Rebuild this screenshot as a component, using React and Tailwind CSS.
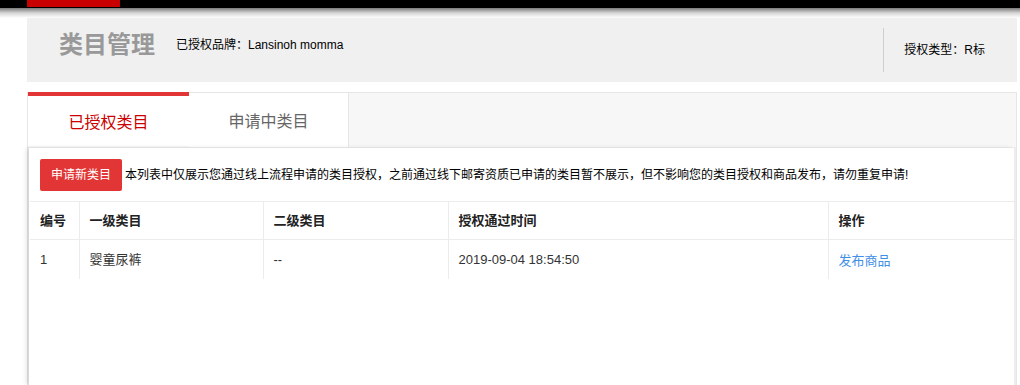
const font = { fontFamily: '"Liberation Sans", "Noto Sans CJK SC", sans-serif' }

const rows = [
  { id: '1', first: '婴童尿裤', second: '--', time: '2019-09-04 18:54:50' },
]

const App = () => {
  return (
    <div className="w-[1020px] h-[385px] overflow-hidden bg-white text-[#333]" style={font}>
      {/* Top bar */}
      <div className="h-[8px] bg-black pl-[27px]">
        <div className="w-[93px] h-[7px] bg-[#c80000]" />
      </div>
      <div className="h-[10px] bg-linear-to-b from-[#7c7c7c] via-[#d6d6d6] to-white" />

      {/* Header */}
      <div className="ml-[27px] w-[990px] h-[64px] bg-[#f0f0f0] flex items-center">
        <div className="flex items-center pl-[32px] mb-[10px]">
          <h1 className="text-[24px] leading-[32px] font-bold text-[#999]">类目管理</h1>
          <span className="ml-[21px] text-[12px] text-black">已授权品牌：Lansinoh momma</span>
        </div>
        <div className="ml-auto h-[44px] border-l border-[#cfcfcf] pl-[20px] pr-[32px] flex items-center">
          <span className="text-[12px] text-black">授权类型：R标</span>
        </div>
      </div>

      {/* Panel */}
      <div className="mt-[10px] ml-[27px] w-[990px] h-[293px] border-t border-x border-[#e6e6e6] bg-[#ededed] flex flex-col">
        {/* Tabs */}
        <div className="h-[55px] bg-[#f7f7f7] border-b border-[#ececec] flex">
          <button
            type="button"
            className="w-[161px] h-full pt-[3px] bg-white border-t-[4px] border-[#e23636] text-[16px] text-[#cc0000] -mt-px"
          >
            已授权类目
          </button>
          <button
            type="button"
            className="w-[160px] h-full pt-[4px] bg-white border-r border-[#e6e6e6] text-[16px] text-[#666]"
          >
            申请中类目
          </button>
        </div>

        {/* Content */}
        <div className="flex-1 ml-[1px] mr-[2px] bg-white shadow-[-3px_0_4px_rgba(0,0,0,0.1)]">
          <div className="flex items-center pt-[11px] pl-[11px]">
            <button
              type="button"
              className="h-[32px] px-[11px] rounded-[2px] bg-[#e23636] text-white text-[12px]"
            >
              申请新类目
            </button>
            <p className="ml-[3px] text-[12px] text-black">
              本列表中仅展示您通过线上流程申请的类目授权，之前通过线下邮寄资质已申请的类目暂不展示，但不影响您的类目授权和商品发布，请勿重复申请!
            </p>
          </div>

          <table className="mt-[10px] ml-px w-[984px] table-fixed border-collapse text-[13px]">
            <colgroup>
              <col className="w-[49px]" />
              <col className="w-[184px]" />
              <col className="w-[185px]" />
              <col className="w-[380px]" />
              <col className="w-[186px]" />
            </colgroup>
            <thead>
              <tr className="h-[38px] border-t border-b border-[#ececec] text-left">
                <th className="pl-[10px] font-bold text-[#222] border-r border-[#ececec]">编号</th>
                <th className="pl-[10px] font-bold text-[#222] border-r border-[#ececec]">一级类目</th>
                <th className="pl-[10px] font-bold text-[#222] border-r border-[#ececec]">二级类目</th>
                <th className="pl-[10px] font-bold text-[#222] border-r border-[#ececec]">授权通过时间</th>
                <th className="pl-[10px] font-bold text-[#222] border-r border-[#ececec]">操作</th>
              </tr>
            </thead>
            <tbody>
              {rows.map((row) => (
                <tr key={row.id} className="h-[39px] text-[#333]">
                  <td className="pl-[10px] border-r border-[#ececec]">{row.id}</td>
                  <td className="pl-[10px] border-r border-[#ececec]">{row.first}</td>
                  <td className="pl-[10px] border-r border-[#ececec]">{row.second}</td>
                  <td className="pl-[10px] border-r border-[#ececec]">{row.time}</td>
                  <td className="pl-[10px] border-r border-[#ececec]">
                    <a href="#" className="text-[#3f8fe6] pt-[2px] inline-block">发布商品</a>
                  </td>
                </tr>
              ))}
            </tbody>
          </table>
        </div>
      </div>
    </div>
  )
}

export default App
